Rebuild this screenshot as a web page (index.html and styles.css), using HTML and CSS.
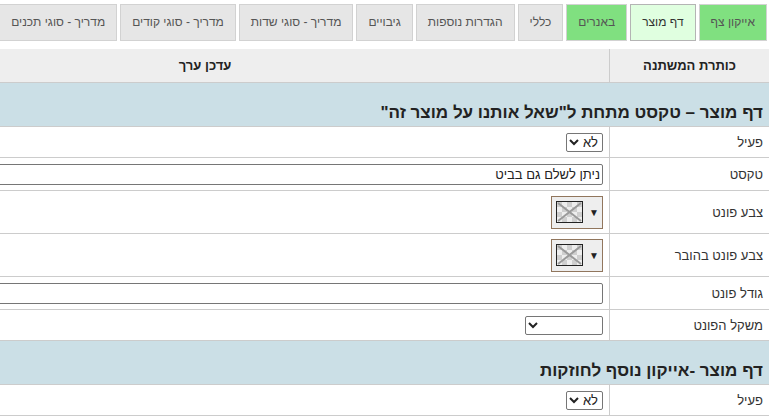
FILE: index.html
```html
<!DOCTYPE html>
<html lang="he" dir="rtl">
<head>
    <meta charset="UTF-8">
    <meta name="viewport" content="width=device-width, initial-scale=1.0">
    <title>הגדרות אתר</title>
    <link rel="stylesheet" href="styles.css">
</head>
<body>
    <div class="tabs">
        <div class="tab green">אייקון צף</div>
        <div class="tab active">דף מוצר</div>
        <div class="tab green">באנרים</div>
        <div class="tab">כללי</div>
        <div class="tab">הגדרות נוספות</div>
        <div class="tab">גיבויים</div>
        <div class="tab">מדריך - סוגי שדות</div>
        <div class="tab">מדריך - סוגי קודים</div>
        <div class="tab">מדריך - סוגי תכנים</div>
        <div class="tab">עזרה</div>
    </div>

    <div class="settings">
        <div class="row head">
            <div class="label">כותרת המשתנה</div>
            <div class="value">עדכן ערך</div>
        </div>

        <div class="row section">
            <h3>דף מוצר – טקסט מתחת ל"שאל אותנו על מוצר זה"</h3>
        </div>
        <div class="row h31">
            <div class="label">פעיל</div>
            <div class="value">
                <select class="sel-short"><option>לא</option><option>כן</option></select>
            </div>
        </div>
        <div class="row h33">
            <div class="label">טקסט</div>
            <div class="value"><input type="text" class="txt" value="ניתן לשלם גם בביט"></div>
        </div>
        <div class="row h43">
            <div class="label">צבע פונט</div>
            <div class="value">
                <div class="picker">
                    <div class="swatch">
                        <svg width="25" height="20" viewBox="0 0 25 20">
                            <rect width="25" height="20" fill="#eeeeee"/>
                            <path d="M0 0h5v5H0zM10 0h5v5h-5zM20 0h5v5h-5zM5 5h5v5H5zM15 5h5v5h-5zM0 10h5v5H0zM10 10h5v5h-5zM20 10h5v5h-5zM5 15h5v5H5zM15 15h5v5h-5z" fill="#cfcfcf"/>
                            <path d="M1 1L24 19M24 1L1 19" stroke="#9a9a9a" stroke-width="2"/>
                        </svg>
                    </div>
                    <span class="dd">▼</span>
                </div>
            </div>
        </div>
        <div class="row h43">
            <div class="label">צבע פונט בהובר</div>
            <div class="value">
                <div class="picker">
                    <div class="swatch">
                        <svg width="25" height="20" viewBox="0 0 25 20">
                            <rect width="25" height="20" fill="#eeeeee"/>
                            <path d="M0 0h5v5H0zM10 0h5v5h-5zM20 0h5v5h-5zM5 5h5v5H5zM15 5h5v5h-5zM0 10h5v5H0zM10 10h5v5h-5zM20 10h5v5h-5zM5 15h5v5H5zM15 15h5v5h-5z" fill="#cfcfcf"/>
                            <path d="M1 1L24 19M24 1L1 19" stroke="#9a9a9a" stroke-width="2"/>
                        </svg>
                    </div>
                    <span class="dd">▼</span>
                </div>
            </div>
        </div>
        <div class="row h33">
            <div class="label">גודל פונט</div>
            <div class="value"><input type="text" class="txt"></div>
        </div>
        <div class="row h31">
            <div class="label">משקל הפונט</div>
            <div class="value">
                <select class="sel-wide"><option></option><option>רגיל</option><option>מודגש</option></select>
            </div>
        </div>

        <div class="row section">
            <h3>דף מוצר -אייקון נוסף לחוזקות</h3>
        </div>
        <div class="row h31">
            <div class="label">פעיל</div>
            <div class="value">
                <select class="sel-short"><option>לא</option><option>כן</option></select>
            </div>
        </div>
    </div>
</body>
</html>
```

FILE: styles.css
```css
html, body {
    margin: 0;
    overflow: hidden;
}

body {
    direction: rtl;
    font-family: "Liberation Sans", Arial, "DejaVu Sans", sans-serif;
    font-size: 13px;
    color: #333;
    background: #fff;
    padding: 4px 13px 0 0;
}

/* tab strip */
.tabs {
    display: flex;
    gap: 3px;
    margin-right: 2px;
    overflow: hidden;
}

.tab {
    flex-shrink: 0;
    height: 35px;
    line-height: 35px;
    padding: 0 11px;
    background: #e6e6e6;
    border: 1px solid #d2d2d2;
    color: #555;
    font-size: 12px;
    white-space: nowrap;
}

.tab.green {
    background: #80e080;
}

.tab.active {
    background: #e0ffe0;
    border-color: #b4b4b4;
    color: #333;
}

/* settings grid */
.settings {
    width: 968px;
    margin-top: 8px;
}

.row {
    display: grid;
    grid-template-columns: 160px 1fr;
    border-bottom: 1px solid #cccccc;
    box-sizing: border-box;
}

.row .label {
    display: flex;
    align-items: center;
    padding: 0 6px;
    border-left: 1px solid #cccccc;
}

.row .value {
    display: flex;
    align-items: center;
    padding: 0 6px 0 0;
}

.h31 { height: 31px; }
.h33 { height: 33px; }
.h43 { height: 43px; }

.head {
    height: 34px;
    background: #eeeeee;
    font-weight: bold;
    color: #222;
}

.head .label,
.head .value {
    justify-content: center;
    padding: 0;
}

.section {
    display: flex;
    align-items: flex-end;
    height: 44px;
    background: #cbdfe6;
}

.section h3 {
    margin: 0 6px 3px 0;
    font-size: 17px;
    font-weight: bold;
    color: #222;
}

/* form controls */
select {
    font-family: inherit;
    font-size: 13px;
    color: #222;
    height: 19px;
    padding: 0;
    border: 1px solid #767676;
    border-radius: 2px;
    background: #fff;
}

.sel-short { width: 37px; }
.sel-wide { width: 78px; }

.txt {
    box-sizing: border-box;
    width: 100%;
    height: 21px;
    padding: 1px 2px;
    font-family: inherit;
    font-size: 13px;
    color: #222;
    border: 1px solid #767676;
    border-radius: 2px;
}

/* colour picker button: preview on the left, arrow on the right */
.picker {
    direction: ltr;
    display: flex;
    align-items: center;
    gap: 6px;
    box-sizing: border-box;
    width: 52px;
    height: 33px;
    padding: 0 4px;
    background: #eee;
    border: 1px solid #91765d;
}

.swatch {
    width: 25px;
    height: 20px;
    border: 1px solid #222;
    line-height: 0;
}

.dd {
    font-size: 10px;
    color: #222;
}
```
